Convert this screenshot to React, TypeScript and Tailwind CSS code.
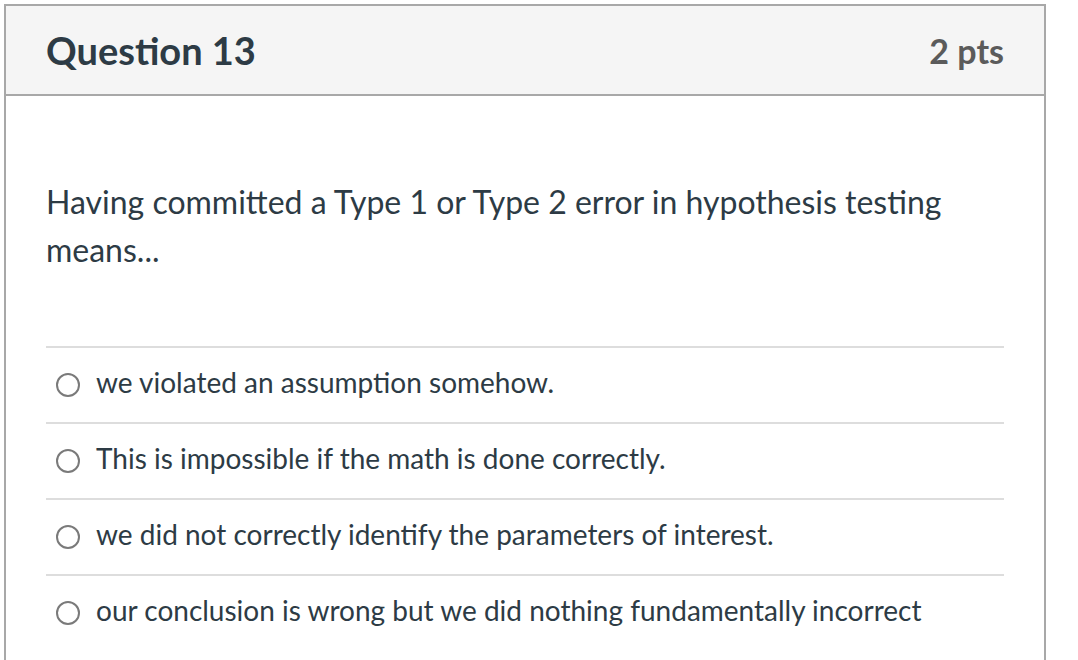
const answers = [
  "we violated an assumption somehow.",
  "This is impossible if the math is done correctly.",
  "we did not correctly identify the parameters of interest.",
  "our conclusion is wrong but we did nothing fundamentally incorrect",
];

const Radio = () => (
  <span className="w-[24px] h-[24px] shrink-0 rounded-full border-2 border-[#7a7a7a] bg-white" />
);

export default function App() {
  return (
    <div className="min-h-screen bg-white pl-[4px] pt-[4px] font-['Lato',sans-serif] text-[#2d3b45]">
      <div className="w-[1042px] border-2 border-b-0 border-[#a8a8a8] pb-[40px]">
        {/* header */}
        <div className="h-[90px] bg-[#f5f5f5] border-b-2 border-[#a8a8a8] px-[40px] flex items-center justify-between">
          <h2 className="text-[38px] font-bold text-[#2d3b45]">Question 13</h2>
          <span className="text-[34px] font-bold text-[#5b5b5b]">2 pts</span>
        </div>

        <div className="px-[40px] pt-[82px]">
          <p className="text-[32px] leading-[48px] w-[940px]">
            Having committed a Type 1 or Type 2 error in hypothesis testing means...
          </p>

          <div className="mt-[72px]">
            {answers.map(a => (
              <div key={a} className="h-[76px] border-t-2 border-[#dddddd] flex items-center gap-[16px] pl-[10px]">
                <Radio />
                <span className="text-[28px] leading-[34px] -mt-[6px]">{a}</span>
              </div>
            ))}
          </div>
        </div>
      </div>
    </div>
  );
}
